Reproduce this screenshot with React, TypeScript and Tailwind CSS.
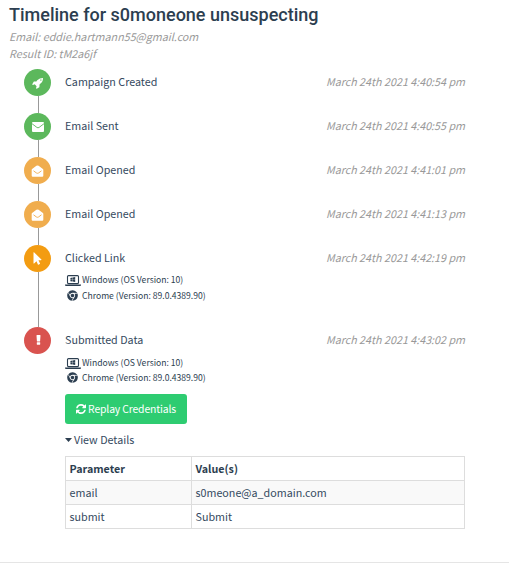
import React from "react";
import { FaChrome } from "react-icons/fa";

const FONT = "font-['Noto_Sans_CJK_SC','Liberation_Sans',sans-serif]";

function Rocket() {
  return (
    <svg viewBox="0 0 1664 1792" className="h-[12px] w-[11px] fill-current">
      <path d="M1440 448q0-40-28-68t-68-28-68 28-28 68 28 68 68 28 68-28 28-68zm224-288q0 249-75.5 430.5t-253.5 360.5q-81 80-195 176l-20 379q-2 16-16 26l-384 224q-7 4-16 4-12 0-23-9l-64-64q-13-14-8-32l85-276-281-281-276 85q-3 1-9 1-14 0-23-9l-64-64q-17-19-5-39l224-384q10-14 26-16l379-20q96-114 176-195 188-187 358-258t431-71q14 0 24 9.5t10 22.5z" />
    </svg>
  );
}

function Envelope() {
  return (
    <svg viewBox="0 0 12 10" className="h-[10px] w-[12px]">
      <path d="M0 1Q0 0 1 0H11Q12 0 12 1V9Q12 10 11 10H1Q0 10 0 9Z" fill="currentColor" />
      <path d="M0 1.7L4.9 5.4Q6 6.2 7.1 5.4L12 1.7" fill="none" stroke="#5cb85c" strokeWidth="0.9" />
    </svg>
  );
}

function OpenEnvelope() {
  return (
    <svg viewBox="0 0 13 13" className="h-[12px] w-[13px]">
      <path d="M0.2 5.2Q0.2 4.6 1 4L5.3 0.9Q6.5 0 7.7 0.9L12 4Q12.8 4.6 12.8 5.2V11.6Q12.8 12.8 11.6 12.8H1.4Q0.2 12.8 0.2 11.6Z" fill="currentColor" />
      <path d="M2.2 6.3L5.3 8.6Q6.5 9.4 7.7 8.6L10.8 6.3" fill="none" stroke="#f0ad4e" strokeWidth="1" />
    </svg>
  );
}

function Pointer() {
  return (
    <svg viewBox="0 0 9 13" className="mr-[1px] h-[13px] w-[9px] fill-current">
      <path d="M0.5 0.5Q0.5 0 1 0.3L8.4 7.5Q8.7 8.1 8 8.2H5.5L7 11.6Q7.1 12 6.8 12.1L5.4 12.7Q5 12.8 4.9 12.4L3.5 9.2L1.1 11.5Q0.5 11.8 0.5 11.2Z" />
    </svg>
  );
}

function Exclamation() {
  return (
    <svg viewBox="0 0 5 10" className="mb-px ml-px h-[10px] w-[5px] fill-current">
      <path d="M1 0H4Q4.5 0 4.5 0.5L4.1 5.9Q4 6.4 3.6 6.4H1.4Q1 6.4 0.9 5.9L0.5 0.5Q0.5 0 1 0ZM1.2 7.2H3.8Q4.2 7.2 4.2 7.6V9.3Q4.2 9.7 3.8 9.7H1.2Q0.8 9.7 0.8 9.3V7.6Q0.8 7.2 1.2 7.2Z" />
    </svg>
  );
}

function Refresh() {
  return (
    <svg viewBox="0 0 1536 1536" className="h-[10px] w-[10px] fill-current">
      <path transform="translate(0 -128)" d="M1511 1056q0 5-1 7-64 268-268 434.5t-478 166.5q-146 0-282.5-55t-243.5-157l-129 129q-19 19-45 19t-45-19-19-45v-448q0-26 19-45t45-19h448q26 0 45 19t19 45-19 45l-137 137q71 66 161 102t187 36q134 0 250-65t186-179q11-17 53-117 8-23 30-23h192q13 0 22.5 9.5t9.5 22.5zm25-800v448q0 26-19 45t-45 19h-448q-26 0-45-19t-19-45 19-45l138-138q-148-137-349-137-134 0-250 65t-186 179q-11 17-53 117-8 23-30 23h-199q-13 0-22.5-9.5t-9.5-22.5v-7q65-268 270-434.5t480-166.5q146 0 284 55.5t245 156.5l130-129q19-19 45-19t45 19 19 45z" />
    </svg>
  );
}

function Laptop() {
  return (
    <svg viewBox="0 0 16 11" className="mt-[2px] h-[11px] w-4">
      <rect x="2.5" y="0.6" width="11" height="8" rx="1" fill="none" stroke="currentColor" strokeWidth="1.1" />
      <path d="M0 9.4H16V10Q16 10.9 15 10.9H1Q0 10.9 0 10Z" fill="currentColor" />
      <path d="M5.4 2.9L7.4 2.6V4.4H5.4ZM7.7 2.5L10.2 2.1V4.4H7.7ZM5.4 4.7H7.4V6.5L5.4 6.2ZM7.7 4.7H10.2V6.9L7.7 6.5Z" fill="currentColor" />
    </svg>
  );
}

function Device({ gap }: { gap: string }) {
  return (
    <div className={`flex flex-col text-[8.6px] leading-[14px] text-[#2c3e50] ${gap}`}>
      <div className="flex h-[15px] items-center gap-px">
        <Laptop />
        <span className="pb-[2px] whitespace-nowrap">Windows (OS Version: 10)</span>
      </div>
      <div className="flex h-[15px] items-center">
        <span className="flex w-[17px] pl-[2px]">
          <FaChrome className="h-[11px] w-[11px]" />
        </span>
        <span className="pb-[2px] whitespace-nowrap">Chrome (Version: 89.0.4389.90)</span>
      </div>
    </div>
  );
}

type EventProps = {
  color: string;
  icon: React.ReactNode;
  title: string;
  time: string;
  height: string;
  last?: boolean;
  children?: React.ReactNode;
};

function Event({ color, icon, title, time, height, last, children }: EventProps) {
  return (
    <div className={`flex ${height}`}>
      <div className="flex w-[27px] shrink-0 flex-col items-center">
        <div className={`flex h-[27px] w-[27px] shrink-0 items-center justify-center rounded-full text-white ${color}`}>{icon}</div>
        {!last && <div className="ml-[2px] w-px grow bg-[#999]" />}
      </div>
      <div className="ml-[14px] w-[400px]">
        <div className="flex h-[27px] items-center justify-between pb-px leading-4">
          <span>{title}</span>
          <span className="text-[#999] italic">{time}</span>
        </div>
        {children}
      </div>
    </div>
  );
}

export default function App() {
  return (
    <div className={`flex h-[564px] w-[509px] flex-col overflow-hidden bg-white text-[10.74px] text-[#34495e] ${FONT}`}>
      <h1 className="ml-[9px] h-7 pt-[3px] font-['Roboto',sans-serif] text-[18px] leading-6 font-medium text-[#2c3e50]">
        Timeline for s0moneone unsuspecting
      </h1>
      <div className="ml-[9px] h-[41px] leading-[17px] text-[#999] italic">
        <p>Email: eddie.hartmann55@gmail.com</p>
        <p>Result ID: tM2a6jf</p>
      </div>
      <div className="ml-6">
        <Event color="bg-[#5cb85c]" icon={<Rocket />} title="Campaign Created" time="March 24th 2021 4:40:54 pm" height="h-11" />
        <Event color="bg-[#5cb85c]" icon={<Envelope />} title="Email Sent" time="March 24th 2021 4:40:55 pm" height="h-11" />
        <Event color="bg-[#f0ad4e]" icon={<OpenEnvelope />} title="Email Opened" time="March 24th 2021 4:41:01 pm" height="h-11" />
        <Event color="bg-[#f0ad4e]" icon={<OpenEnvelope />} title="Email Opened" time="March 24th 2021 4:41:13 pm" height="h-11" />
        <Event color="bg-[#f39c12]" icon={<Pointer />} title="Clicked Link" time="March 24th 2021 4:42:19 pm" height="h-[82px]">
          <Device gap="gap-px" />
        </Event>
        <Event color="bg-[#d9534f]" icon={<Exclamation />} title="Submitted Data" time="March 24th 2021 4:43:02 pm" height="h-[235px]" last>
          <Device gap="pt-px" />
          <button className="mt-[9px] flex h-[30px] w-[122px] items-center justify-center gap-[2px] rounded-[3px] bg-[#2ecc71] pb-px text-[10.4px] tracking-[-0.15px] text-white">
            <Refresh />
            <span className="whitespace-nowrap">Replay Credentials</span>
          </button>
          <div className="mt-[8px] flex h-4 items-center gap-[2px]">
            <svg viewBox="0 0 7 4" className="h-1 w-[7px] fill-[#2c3e50]">
              <path d="M0 0H7L3.5 4Z" />
            </svg>
            <span>View Details</span>
          </div>
          <table className="mt-[8px] w-[400px] table-fixed border-collapse border border-[#ddd] text-left leading-[17px]">
            <thead>
              <tr className="h-6 text-[#2c3e50]">
                <th className="w-[126px] border border-[#ddd] px-[3.5px] py-0 font-bold">Parameter</th>
                <th className="border border-[#ddd] px-[3.5px] py-0 font-bold">Value(s)</th>
              </tr>
            </thead>
            <tbody>
              <tr className="h-6 bg-[#f9f9f9]">
                <td className="border border-[#ddd] px-[3.5px] py-0">email</td>
                <td className="border border-[#ddd] px-[3.5px] py-0">s0meone@a_domain.com</td>
              </tr>
              <tr className="h-6">
                <td className="border border-[#ddd] px-[3.5px] py-0">submit</td>
                <td className="border border-[#ddd] px-[3.5px] py-0">Submit</td>
              </tr>
            </tbody>
          </table>
        </Event>
      </div>
      <div className="mt-auto mb-[1px] h-px shrink-0 bg-[#e5e5e5]" />
    </div>
  );
}
